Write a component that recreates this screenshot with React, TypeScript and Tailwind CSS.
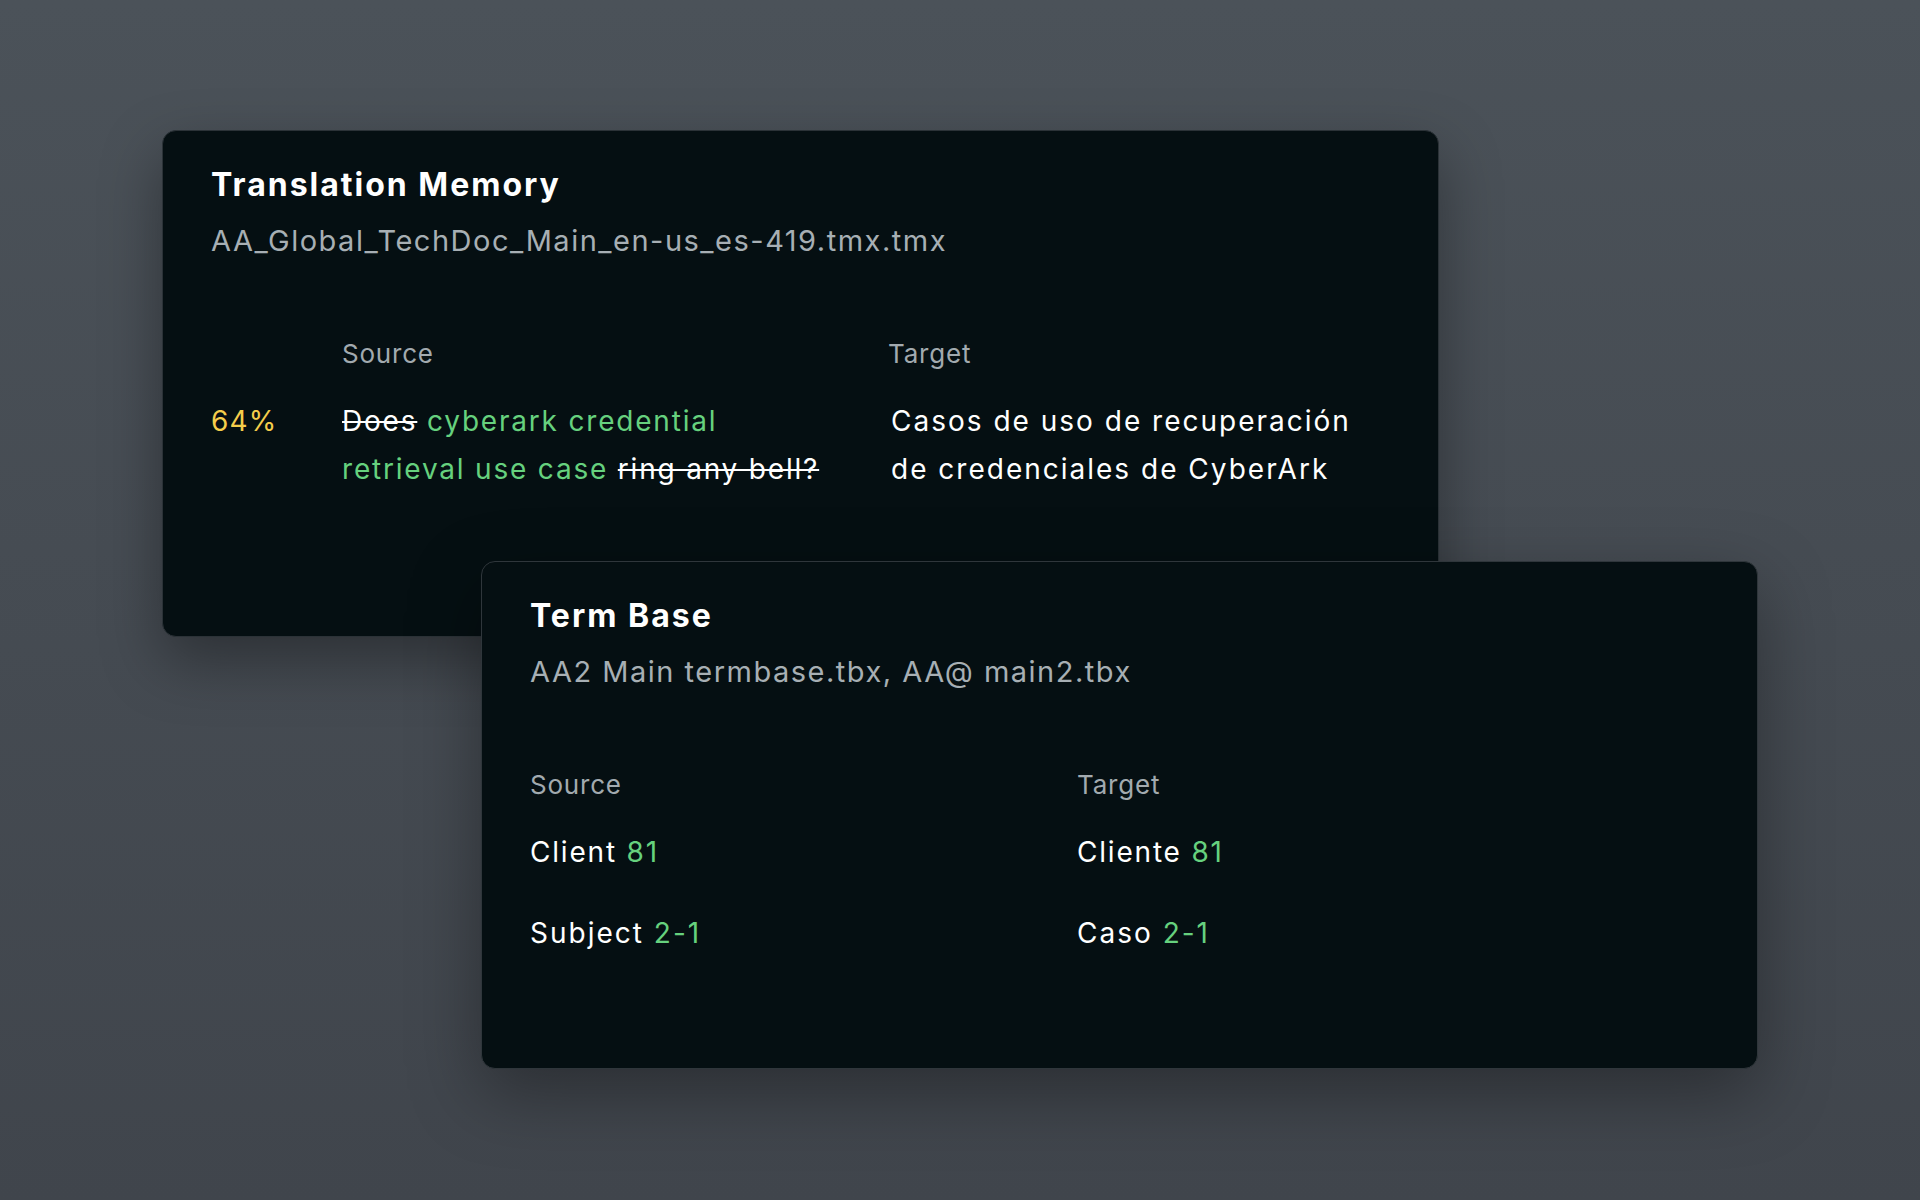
import React from 'react';

const font = { fontFamily: 'Inter, "Noto Sans", sans-serif' };

const App: React.FC = () => {
  return (
    <div
      className="h-[1200px] w-full overflow-hidden bg-linear-to-b from-[#4b5259] to-[#40454c]"
      style={font}
    >
      {/* Translation Memory card */}
      <div className="ml-[162px] mt-[130px] h-[507px] w-[1277px] rounded-[14px] border border-[#2b3237] bg-[#050f12] px-12 pt-[34px] shadow-[0_24px_60px_rgba(0,0,0,0.35)]">
        <h2 className="text-[32px] font-bold leading-[40px] tracking-[2px] text-white">Translation Memory</h2>
        <p className="mt-[16px] text-[29px] leading-[40px] tracking-[1.5px] text-[#a7afb4]">
          AA_Global_TechDoc_Main_en-us_es-419.tmx.tmx
        </p>

        <div className="mt-[75px] grid grid-cols-[131px_546px_1fr]">
          <div />
          <div className="text-[26px] leading-[36px] tracking-[0.8px] text-[#a2aaaf]">Source</div>
          <div className="text-[26px] leading-[36px] tracking-[0.8px] text-[#a2aaaf]">Target</div>

          <div className="mt-[25px] text-[28px] leading-[48px] tracking-[1.2px] text-[#f5cd4b]">64%</div>
          <div className="mt-[25px] text-[28px] leading-[48px] tracking-[1.8px] text-[#66d17e]">
            <span className="text-white line-through decoration-2">Does</span> cyberark credential
            <br />
            retrieval use case <span className="text-white line-through decoration-2">ring any bell?</span>
          </div>
          <div className="mt-[25px] pl-[3px] text-[28px] leading-[48px] tracking-[2px] text-white">
            Casos de uso de recuperación
            <br />
            de credenciales de CyberArk
          </div>
        </div>
      </div>

      {/* Term Base card */}
      <div className="relative z-10 ml-[481px] mt-[-76px] h-[508px] w-[1277px] rounded-[14px] border border-[#2f363b] bg-[#050f12] px-12 pt-[34px] shadow-[0_24px_70px_rgba(0,0,0,0.35)]">
        <h2 className="text-[32px] font-bold leading-[40px] tracking-[2px] text-white">Term Base</h2>
        <p className="mt-[16px] text-[29px] leading-[40px] tracking-[1.5px] text-[#a7afb4]">
          AA2 Main termbase.tbx, AA@ main2.tbx
        </p>

        <div className="mt-[75px] grid grid-cols-[547px_1fr]">
          <div className="text-[26px] leading-[36px] tracking-[0.8px] text-[#a2aaaf]">Source</div>
          <div className="text-[26px] leading-[36px] tracking-[0.8px] text-[#a2aaaf]">Target</div>

          <div className="mt-[25px] text-[28px] leading-[48px] tracking-[1.8px] text-white">
            Client <span className="text-[#66d17e]">81</span>
          </div>
          <div className="mt-[25px] text-[28px] leading-[48px] tracking-[1.8px] text-white">
            Cliente <span className="text-[#66d17e]">81</span>
          </div>

          <div className="mt-[33px] text-[28px] leading-[48px] tracking-[2px] text-white">
            Subject <span className="text-[#66d17e]">2-1</span>
          </div>
          <div className="mt-[33px] text-[28px] leading-[48px] tracking-[2px] text-white">
            Caso <span className="text-[#66d17e]">2-1</span>
          </div>
        </div>
      </div>
    </div>
  );
};

export default App;
